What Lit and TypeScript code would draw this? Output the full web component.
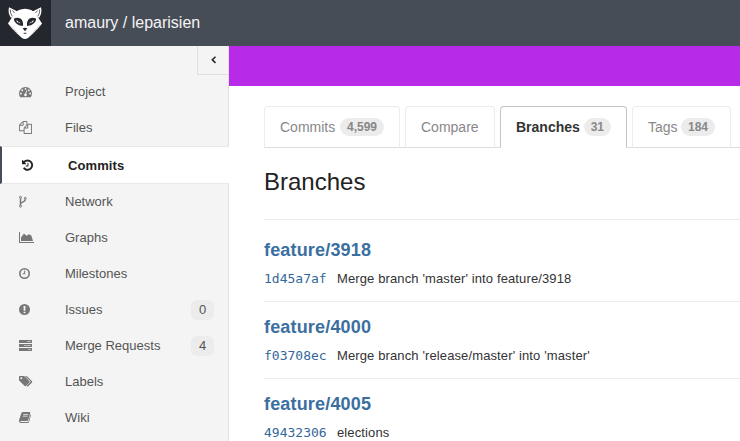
import { LitElement, html, svg, css } from "lit";
import { customElement } from "lit/decorators.js";
import { classMap } from "lit/directives/class-map.js";

const icons: Record<string, unknown> = {
  project: svg`<g transform="translate(0 1.1) scale(.00725 .0073)"><path d="M384 1152q0-53-37.5-90.5t-90.5-37.5-90.5 37.5-37.5 90.5 37.5 90.5 90.5 37.5 90.5-37.5 37.5-90.5zm192-448q0-53-37.5-90.5t-90.5-37.5-90.5 37.5-37.5 90.5 37.5 90.5 90.5 37.5 90.5-37.5 37.5-90.5zm428 481l101-382q6-26-7.5-48.5t-38.5-29.5-48 6.5-30 39.5l-101 382q-60 5-107 43.5t-63 98.5q-20 77 20 146t117 89 146-20 89-117q16-60-6-117t-72-91zm660-33q0-53-37.5-90.5t-90.5-37.5-90.5 37.5-37.5 90.5 37.5 90.5 90.5 37.5 90.5-37.5 37.5-90.5zm-640-640q0-53-37.5-90.5t-90.5-37.5-90.5 37.5-37.5 90.5 37.5 90.5 90.5 37.5 90.5-37.5 37.5-90.5zm448 192q0-53-37.5-90.5t-90.5-37.5-90.5 37.5-37.5 90.5 37.5 90.5 90.5 37.5 90.5-37.5 37.5-90.5zm320 448q0 261-141 483-19 29-54 29h-1402q-35 0-54-29-141-221-141-483 0-182 71-348t191-286 286-191 348-71 348 71 286 191 191 286 71 348z"/></g>`,
  files: svg`<g transform="translate(0 1) scale(.00725)"><path d="M1696 384q40 0 68 28t28 68v1216q0 40-28 68t-68 28h-960q-40 0-68-28t-28-68v-288h-544q-40 0-68-28t-28-68v-672q0-40 20-88t48-76l408-408q28-28 76-48t88-20h416q40 0 68 28t28 68v328q68-40 128-40h416zm-544 213l-299 299h299v-299zm-640-384l-299 299h299v-299zm196 647l316-316v-416h-384v416q0 40-28 68t-68 28h-416v640h512v-256q0-40 20-88t48-76zm956 804v-1152h-384v416q0 40-28 68t-68 28h-416v640h896z"/></g>`,
  commits: svg`<g transform="translate(-1 1.6) scale(.00725)"><path d="M1664 896q0 156-61 298t-164 245-245 164-298 61q-172 0-327-72.5t-264-204.5q-7-10-6.5-22.5t8.5-20.5l137-138q10-9 25-9 16 2 23 12 73 95 179 147t225 52q104 0 198.5-40.5t163.5-109.5 109.5-163.5 40.5-198.5-40.5-198.5-109.5-163.5-163.5-109.5-198.5-40.5q-98 0-188 35.5t-160 101.5l137 138q31 30 14 69-17 40-59 40h-448q-26 0-45-19t-19-45v-448q0-42 40-59 39-17 69 14l130 129q107-101 244.5-156.5t284.5-55.5q156 0 298 61t245 164 164 245 61 298zm-640-288v448q0 14-9 23t-23 9h-320q-14 0-23-9t-9-23v-64q0-14 9-23t23-9h224v-352q0-14 9-23t23-9h64q14 0 23 9t9 23z"/></g>`,
  network: svg`<g fill="none" stroke="currentColor"><circle cx="1.500" cy="3.300" r="1"/><circle cx="1.500" cy="12.200" r="1"/><circle cx="6.300" cy="4.300" r="1"/><path stroke-width="1.500" d="M1.500 4.300v6.900M6.300 5.300c0 3.400-4.500 2.200-4.800 4.600"/></g>`,
  graphs: svg`<path d="M0 2h1v10h14v1H0zM2 11V7.600L5 3.500 7.500 5.800 10 4.200 12.300 5.500 14 11z"/>`,
  milestones: svg`<circle cx="5.500" cy="7.500" r="4.700" fill="none" stroke="currentColor" stroke-width="1.600"/><path d="M5.200 4.600h1v3.700H3.600v-1h1.600z"/>`,
  issues: svg`<path fill-rule="evenodd" d="M5.500 2a5.500 5.500 0 1 1 0 11a5.500 5.500 0 0 1 0-11zM4.500 3.900l.2 4.900h1.600l.2-4.900zM4.600 9.700v1.500h1.800V9.700z"/>`,
  merge: svg`<path d="M0 2h13v3H0zM0 6h13v3H0zM0 10h13v3H0z"/><path fill="#f4f4f4" fill-opacity=".55" d="M8 3h4v1H8zM5 7h7v1H5zM9 11h3v1H9z"/>`,
  labels: svg`<path fill-rule="evenodd" d="M0 2.800Q0 2 .8 2H4.600Q5.300 2 5.900 2.600L10.400 7.100Q11 7.700 10.400 8.300L6.900 12Q6.300 12.600 5.700 12L.6 7Q0 6.400 0 5.700zM2.300 3.300a1 1 0 1 0 0 2a1 1 0 0 0 0-2z"/><path d="M6 2h1q.7 0 1.300.6l4.700 4.700q.6.600 0 1.200L9.200 12.300q-.6.500-1.200 0l-.5-.5L11.300 8q.5-.5 0-1z"/>`,
  wiki: svg`<path fill-rule="evenodd" d="M4.200 2H10.300Q11.500 2 11.200 3.200L9.300 10Q9 11 8 11H2.100Q1.200 11 1.300 11.500Q1.400 12 2.200 12H8.500Q9.300 12 9.600 11L11.500 4.300Q12.200 4.700 11.900 5.600L10.100 11.700Q9.700 13 8.500 13H2Q0 13 0 11Q0 10 .4 9L2.300 3.300Q2.700 2 4.200 2zM4.400 4l-.2.800H9L9.200 4zM3.900 5.800l-.2.800h4.800l.2-.8z"/>`,
};

interface NavItem {
  icon: string;
  label: string;
  count?: number;
  active?: boolean;
}

const nav: NavItem[] = [
  { icon: "project", label: "Project" },
  { icon: "files", label: "Files" },
  { icon: "commits", label: "Commits", active: true },
  { icon: "network", label: "Network" },
  { icon: "graphs", label: "Graphs" },
  { icon: "milestones", label: "Milestones" },
  { icon: "issues", label: "Issues", count: 0 },
  { icon: "merge", label: "Merge Requests", count: 4 },
  { icon: "labels", label: "Labels" },
  { icon: "wiki", label: "Wiki" },
];

const tabs = [
  { id: "commits", label: "Commits", count: "4,599" },
  { id: "compare", label: "Compare" },
  { id: "branches", label: "Branches", count: "31" },
  { id: "tags", label: "Tags", count: "184" },
];

const branches = [
  { name: "feature/3918", sha: "1d45a7af", message: "Merge branch 'master' into feature/3918" },
  { name: "feature/4000", sha: "f03708ec", message: "Merge branch 'release/master' into 'master'" },
  { name: "feature/4005", sha: "49432306", message: "elections" },
];

@customElement("app-root")
export class AppRoot extends LitElement {
  static styles = css`
    * { box-sizing: border-box; }
    :host {
      display: flex;
      flex-direction: column;
      height: 441px;
      overflow: hidden;
      background: #fff;
      color: #333;
      font: 13px/20px "Liberation Sans", Arial, sans-serif;
    }
    header { display: flex; flex: none; height: 46px; background: #474d57; }
    .logo { width: 51px; height: 46px; background: #24272d; }
    .logo svg { display: block; }
    .title { margin-left: 14px; font-size: 16px; line-height: 45px; color: #f4f4f4; }
    .body { display: flex; flex: 1; min-height: 0; }
    aside {
      flex: none;
      width: 229px;
      background: #f4f4f4;
      border-right: 1px solid #e1e1e1;
    }
    .collapse {
      display: flex;
      align-items: center;
      justify-content: center;
      width: 31px;
      height: 29px;
      margin: 0 0 -1px auto;
      padding-left: 1px;
      border: solid #dfdfdf;
      border-width: 0 0 1px 1px;
    }
    .item {
      display: flex;
      align-items: center;
      height: 36px;
      padding: 0 14px 0 19px;
      color: #555;
    }
    .item svg { flex: none; width: 16px; height: 16px; margin-right: 30px; fill: currentColor; color: #777; }
    .item .label { flex: 1; line-height: 19px; padding-bottom: 1px; }
    .item.active {
      height: 38px;
      margin-right: -1px;
      padding-left: 20px;
      background: #fff;
      border: solid #e8e8e8;
      border-width: 1px 0;
      border-left: 2px solid #474d57;
      color: #222;
      font-weight: bold;
    }
    .item.active .label { padding: 1px 0 0; letter-spacing: .1px; }
    .item.active svg { color: #222; }
    .count {
      width: 23px;
      height: 20px;
      border-radius: 6px;
      background: #ececec;
      text-align: center;
      font-size: 13px;
      line-height: 20px;
    }
    main { flex: 1; min-width: 0; }
    .banner { height: 40px; background: #b72ae8; }
    .content { padding: 20px 0 0 35px; }
    .tabs { display: flex; height: 42px; border-bottom: 1px solid #ddd; }
    .tab {
      display: flex;
      align-items: center;
      flex: none;
      height: 42px;
      padding: 0 15px;
      margin-right: 5px;
      border: 1px solid #ececec;
      border-bottom-color: #ddd;
      border-radius: 4px 4px 0 0;
      font-size: 14px;
      color: #888;
    }
    .tab.commits { width: 136px; }
    .tab.compare { width: 90px; }
    .tab.branches {
      width: 127px;
      border-color: #c4c4c4;
      border-bottom-color: #fff;
      background: #fff;
      color: #333;
      font-weight: bold;
    }
    .tab.tags { width: 99px; }
    .pill {
      margin-left: auto;
      height: 18px;
      padding: 0 7px;
      border-radius: 9px;
      background: #ececec;
      color: #888;
      font-size: 12px;
      font-weight: bold;
      line-height: 18px;
    }
    h1 { margin: 0; padding: 18px 0 21px; font-size: 24px; font-weight: 400; line-height: 32px; color: #222; }
    .branch { height: 77px; padding-top: 15px; border-top: 1px solid #ebebeb; }
    .branch:first-of-type { height: 82px; padding-top: 20px; }
    h2 { margin: 0; font-size: 18px; line-height: 20px; letter-spacing: .17px; color: #3b6f9f; }
    .commit { display: flex; margin-top: 9px; }
    .sha { width: 73px; font-family: "DejaVu Sans Mono", monospace; font-size: 13px; color: #34679a; }
    .msg { white-space: nowrap; letter-spacing: .12px; }
  `;

  private icon(name: string) {
    return html`<svg viewBox="0 0 16 16">${icons[name]}</svg>`;
  }

  render() {
    return html`
      <header>
        <div class="logo">
          <svg width="51" height="46" viewBox="0 0 51 46">
            <g fill="#fff">
              <path d="M9 7.300 17.500 11.500 11 18Q7.500 13 9 7.300zM41 7.300 32.500 11.500 39 18Q42.500 13 41 7.300z"/>
              <path d="M25 8.700Q32 9 35.500 13.500L42 23.500 38.500 28 33 33.500 28 38Q25 40 22 38L17 33.500 11.500 28 8 23.500 14.500 13.500Q18 9 25 8.700z"/>
            </g>
            <g fill="none" stroke="#24272d" stroke-width=".7">
              <path d="M10.300 9.500Q10 13 12 16M12.500 10.500 14.500 13M39.700 9.500Q40 13 38 16M37.500 10.500 35.500 13"/>
              <path d="M10 25.500 17 32.500M40 25.500 33 32.500" stroke-dasharray="1.200 1" stroke-opacity=".6"/>
            </g>
            <g fill="#24272d">
              <path d="M13.800 18.800Q17.500 16.800 20.800 18.800 23.500 21 23 26 18.500 25.800 16 23.200 13.800 21.300 13.800 18.800zM36.200 18.800Q32.500 16.800 29.200 18.800 26.500 21 27 26 31.500 25.800 34 23.200 36.200 21.300 36.200 18.800z"/>
              <path d="M22.700 28.300Q25 27.400 27.300 28.300L25.500 30.700H24.500zM23 33Q25 32.300 27 33L25 33.900z"/>
            </g>
            <path d="M16.200 20 20.800 23.200Q17.200 23.600 16.200 20zM33.800 20 29.200 23.200Q32.800 23.600 33.800 20z" fill="#fff"/>
            <circle cx="18.700" cy="21.900" r=".7" fill="#24272d"/>
            <circle cx="31.300" cy="21.900" r=".7" fill="#24272d"/>
          </svg>
        </div>
        <div class="title">amaury / leparisien</div>
      </header>
      <div class="body">
        <aside>
          <div class="collapse">
            <svg width="8" height="10" viewBox="0 0 8 10"><path d="M5.500 1.700 2.300 4.800 5.500 7.900" fill="none" stroke="#222" stroke-width="1.500"/></svg>
          </div>
          <nav>
            ${nav.map(
              (n) => html`<div class=${classMap({ item: true, active: !!n.active })}>
                ${this.icon(n.icon)}<span class="label">${n.label}</span>
                ${n.count !== undefined ? html`<span class="count">${n.count}</span>` : ""}
              </div>`
            )}
          </nav>
        </aside>
        <main>
          <div class="banner"></div>
          <div class="content">
            <div class="tabs">
              ${tabs.map(
                (t) => html`<div class="tab ${t.id}">
                  <span>${t.label}</span>${t.count ? html`<span class="pill">${t.count}</span>` : ""}
                </div>`
              )}
            </div>
            <h1>Branches</h1>
            <div>
              ${branches.map(
                (b) => html`<div class="branch">
                  <h2>${b.name}</h2>
                  <div class="commit"><span class="sha">${b.sha}</span><span class="msg">${b.message}</span></div>
                </div>`
              )}
            </div>
          </div>
        </main>
      </div>
    `;
  }
}
